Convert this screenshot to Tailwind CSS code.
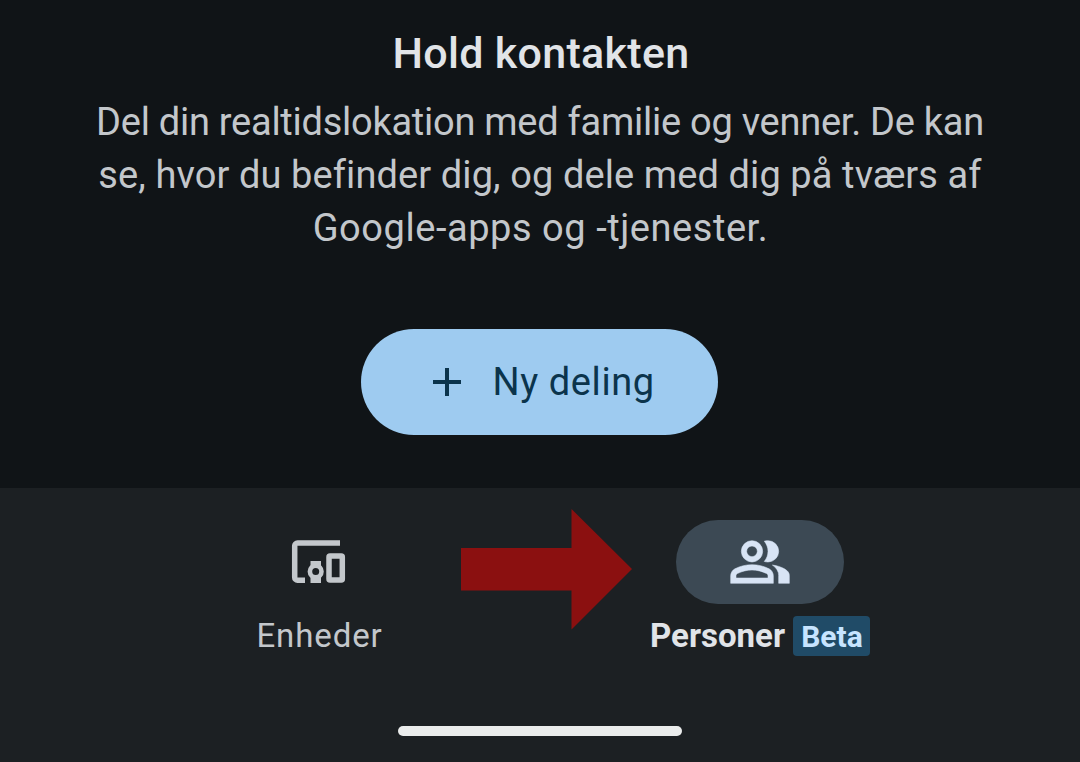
<!DOCTYPE html>
<html lang="da">

<head>
    <meta charset="UTF-8">
    <meta name="viewport" content="width=device-width, initial-scale=1.0">
    <title>Hold kontakten</title>
    <script src="https://cdn.jsdelivr.net/npm/@tailwindcss/browser@4"></script>
</head>

<body class="bg-[#101417] font-['Roboto',sans-serif]">
    <div class="relative flex h-[762px] w-[1080px] flex-col overflow-hidden">
        <!-- Sharing intro -->
        <main class="flex h-[488px] flex-col items-center pt-[25px]">
            <h1 class="pl-0.5 text-[43px] leading-14 font-medium tracking-[0.3px] text-[#e1e4e8]">Hold kontakten</h1>
            <p class="mt-[15px] text-center text-[38px] leading-[53px] whitespace-nowrap text-[#c3c7cb]">
                <span class="tracking-[-0.26px]">Del din realtidslokation med familie og venner. De kan</span><br>
                <span class="tracking-[0.1px]">se, hvor du befinder dig, og dele med dig på tværs af</span><br>
                <span class="pl-px tracking-[0.55px]">Google-apps og -tjenester.</span>
            </p>
            <button class="mt-[74px] mr-0.5 flex h-[106px] w-[357px] items-center rounded-full bg-[#9ecbf0] pl-[72px] text-[38px] tracking-[0.6px] text-[#0b344c]">
                <svg class="mr-8 size-7" viewBox="0 0 28 28" fill="none" stroke="currentColor" stroke-width="4">
                    <path d="M14 0v28M0 14h28" />
                </svg>
                <span>Ny deling</span>
            </button>
        </main>

        <!-- Bottom navigation -->
        <nav class="flex h-[274px] flex-col items-center bg-[#1c2023]">
            <div class="grid w-[880px] grid-cols-2 pt-8">
                <a href="#" class="flex flex-col items-center text-[#c3c7cb]">
                    <span class="flex h-[84px] w-[168px] items-center justify-center">
                        <svg class="size-16" viewBox="0 0 64 64" fill="none" stroke="currentColor" stroke-width="5.5">
                            <path d="M52 13H9.5a2.8 2.8 0 0 0-2.800 2.800v31.600a2.800 2.800 0 0 0 2.800 2.800H17" />
                            <rect x="41" y="26" width="13.300" height="24" rx="1" />
                            <path fill="currentColor" stroke="none" d="M22.500 31h10.500v6H22.500zM22.500 46h10.500v7H22.500z" />
                            <circle cx="27.700" cy="41.500" r="5.800" stroke-width="4.600" />
                        </svg>
                    </span>
                    <span class="mt-3 mr-px text-[33px] leading-10 tracking-[0.9px]">Enheder</span>
                </a>
                <a href="#" class="flex flex-col items-center text-[#e1e4e8]">
                    <span class="flex h-[84px] w-[168px] items-center justify-center rounded-full bg-[#3c4954] text-[#d8e4f5]">
                        <svg class="mr-px size-16" viewBox="0 -960 960 960" fill="currentColor" stroke="currentColor" stroke-width="8">
                            <path d="M40-160v-112q0-34 17.5-62.5T104-378q62-31 126-46.5T360-440q66 0 130 15.5T616-378q29 15 46.5 43.5T680-272v112H40Zm720 0v-120q0-44-24.5-84.5T666-434q51 6 96 20.5t84 35.5q36 20 55 44.5t19 53.5v120H760ZM360-480q-66 0-113-47t-47-113q0-66 47-113t113-47q66 0 113 47t47 113q0 66-47 113t-113 47Zm400-160q0 66-47 113t-113 47q-11 0-28-2.5t-28-5.5q27-32 41.5-71t14.5-81q0-42-14.5-81T544-792q14-5 28-6.5t28-1.5q66 0 113 47t47 113ZM120-240h480v-32q0-11-5.5-20T580-306q-54-27-109-40.5T360-360q-56 0-111 13.5T140-306q-9 5-14.5 14t-5.5 20v32Zm240-320q33 0 56.5-23.5T440-640q0-33-23.5-56.5T360-720q-33 0-56.5 23.5T280-640q0 33 23.5 56.5T360-560Z" />
                        </svg>
                    </span>
                    <span class="mt-3 flex items-center gap-2 text-[33px] leading-10 font-bold">
                        <span>Personer</span>
                        <span class="flex h-10 w-[77px] items-center justify-center rounded-sm bg-[#204b67] pt-0.5 pl-px text-[30px] text-[#c6e4ff]">Beta</span>
                    </span>
                </a>
            </div>
            <div class="mt-[70px] h-2.5 w-[284px] rounded-full bg-[#eaecec]"></div>
        </nav>

        <!-- Arrow pointing at the Personer tab -->
        <svg class="absolute top-[509px] left-[461px] h-[121px] w-[171px]" viewBox="0 0 171 121" fill="#8b1010">
            <path d="M0 39h110.500V0L171 60l-60.500 60.500V81.500H0z" />
        </svg>
    </div>
</body>

</html>
